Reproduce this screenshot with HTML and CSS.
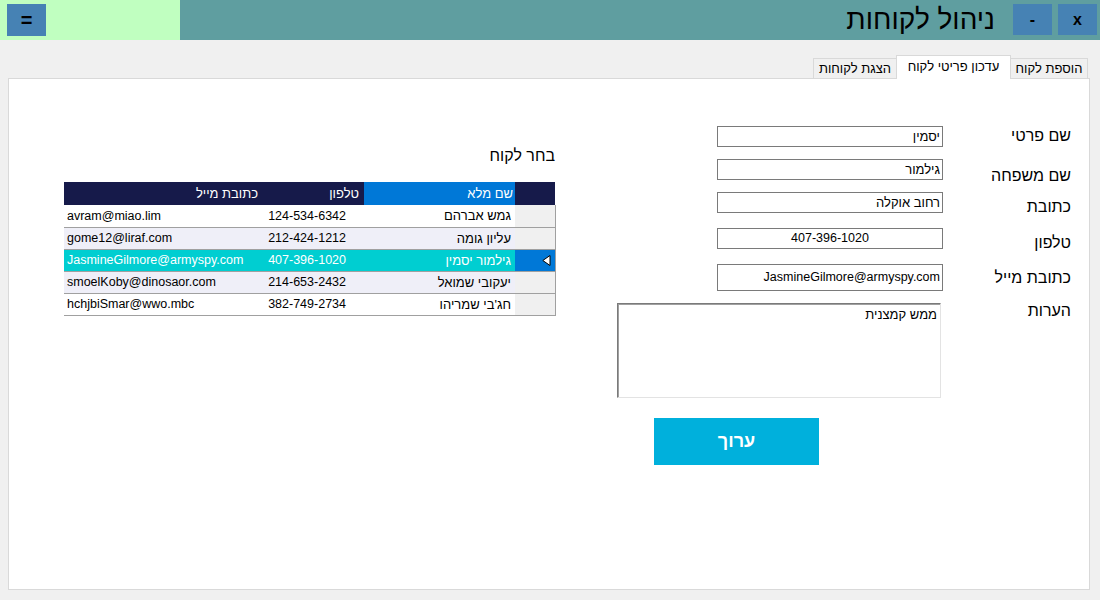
FILE: index.html
```html
<!DOCTYPE html>
<html lang="he">
<head>
<meta charset="utf-8">
<title>ניהול לקוחות</title>
<link rel="stylesheet" href="styles.css">
</head>
<body>
<div class="titlebar">
  <div class="menu-area"><div class="win-btn menu-btn">=</div></div>
  <div class="title-area">
    <div class="app-title">ניהול לקוחות</div>
    <div class="win-btn min-btn">-</div>
    <div class="win-btn close-btn">x</div>
  </div>
</div>

<div class="tabs" dir="rtl">
  <div class="tab tab-add">הוספת לקוח</div>
  <div class="tab tab-edit active">עדכון פריטי לקוח</div>
  <div class="tab tab-show">הצגת לקוחות</div>
</div>

<div class="panel">
  <div class="left">
    <div class="choose-title" dir="rtl">בחר לקוח</div>
    <table class="grid" dir="rtl">
      <thead>
        <tr>
          <th class="rowhead"></th>
          <th class="c-name sel-col">שם מלא</th>
          <th class="c-phone">טלפון</th>
          <th class="c-email">כתובת מייל</th>
        </tr>
      </thead>
      <tbody>
        <tr>
          <td class="rowhead"></td>
          <td class="c-name">גמש אברהם</td>
          <td class="c-phone">124-534-6342</td>
          <td class="c-email">avram@miao.lim</td>
        </tr>
        <tr class="alt">
          <td class="rowhead"></td>
          <td class="c-name">עליון גומה</td>
          <td class="c-phone">212-424-1212</td>
          <td class="c-email">gome12@liraf.com</td>
        </tr>
        <tr class="selected">
          <td class="rowhead"><svg class="arrow" width="9" height="11" viewBox="0 0 9 11"><polygon points="8,0.5 8,10.5 0.8,5.5" fill="#ffffff" stroke="#000000" stroke-width="1"/></svg></td>
          <td class="c-name">גילמור יסמין</td>
          <td class="c-phone">407-396-1020</td>
          <td class="c-email">JasmineGilmore@armyspy.com</td>
        </tr>
        <tr class="alt">
          <td class="rowhead"></td>
          <td class="c-name">יעקובי שמואל</td>
          <td class="c-phone">214-653-2432</td>
          <td class="c-email">smoelKoby@dinosaor.com</td>
        </tr>
        <tr>
          <td class="rowhead"></td>
          <td class="c-name">חג'בי שמריהו</td>
          <td class="c-phone">382-749-2734</td>
          <td class="c-email">hchjbiSmar@wwo.mbc</td>
        </tr>
      </tbody>
    </table>
  </div>

  <div class="right">
    <div class="fields">
      <div class="field f1" dir="rtl">יסמין</div>
      <div class="field f2" dir="rtl">גילמור</div>
      <div class="field f3" dir="rtl">רחוב אוקלה</div>
      <div class="field f4 center">407-396-1020</div>
      <div class="field f5 tall" dir="rtl">JasmineGilmore@armyspy.com</div>
      <div class="notes" dir="rtl">ממש קמצנית</div>
      <div class="edit-btn">ערוך</div>
    </div>
    <div class="labels" dir="rtl">
      <div class="label l1">שם פרטי</div>
      <div class="label l2">שם משפחה</div>
      <div class="label l3">כתובת</div>
      <div class="label l4">טלפון</div>
      <div class="label l5">כתובת מייל</div>
      <div class="label l6">הערות</div>
    </div>
  </div>
</div>
</body>
</html>
```

FILE: styles.css
```css
* { box-sizing: border-box; }

html, body {
  margin: 0;
  padding: 0;
}

body {
  width: 1100px;
  height: 600px;
  overflow: hidden;
  background: #f0f0f0;
  font-family: "Liberation Sans", "DejaVu Sans", Arial, sans-serif;
  color: #000;
}

/* ---------- title bar ---------- */
.titlebar {
  display: flex;
  height: 40px;
}

.menu-area {
  width: 180px;
  background: #c0ffc0;
  padding: 4px 0 0 7px;
}

.title-area {
  flex: 1;
  background: #5f9ea0;
  display: flex;
  justify-content: flex-end;
  align-items: flex-start;
  padding-right: 3px;
}

.win-btn {
  width: 39px;
  height: 31px;
  background: #4682b4;
  color: #000;
  font-weight: bold;
  font-size: 16px;
  display: flex;
  align-items: center;
  justify-content: center;
}

.menu-btn {
  height: 32px;
  font-size: 20px;
}

.title-area .win-btn { margin-top: 4px; }

.min-btn { margin-right: 6px; }

.app-title {
  font-size: 28px;
  line-height: 40px;
  margin-right: 18px;
  color: #000;
}

/* ---------- tabs ---------- */
.tabs {
  display: flex;
  align-items: flex-end;
  height: 23px;
  margin-top: 15px;
  padding-right: 12px;
}

.tab {
  height: 20px;
  border: 1px solid #d9d9d9;
  border-bottom: none;
  background: #f0f0f0;
  font-size: 13px;
  line-height: 19px;
  text-align: center;
  white-space: nowrap;
}

.tab-add { width: 78px; }
.tab-show { width: 84px; margin-right: -1px; }

.tab.active {
  width: 115px;
  height: 24px;
  margin-bottom: -1px;
  margin-right: -1px;
  background: #fff;
  position: relative;
  z-index: 1;
  line-height: 21px;
}

/* ---------- panel ---------- */
.panel {
  margin-left: 8px;
  width: 1082px;
  height: 512px;
  background: #fff;
  border: 1px solid #d9d9d9;
  display: flex;
  justify-content: space-between;
}

.left {
  margin-left: 55px;
  padding-top: 67px;
  width: 491px;
}

.choose-title {
  font-size: 16px;
  line-height: 20px;
  text-align: right;
  height: 20px;
  margin-bottom: 16px;
}

/* ---------- grid ---------- */
.grid {
  border-collapse: collapse;
  width: 491px;
  table-layout: fixed;
  font-size: 12.5px;
}

.grid th {
  height: 23px;
  background: #161a4a;
  color: #fff;
  font-weight: normal;
  font-size: 13px;
  text-align: right;
  padding: 0 5px 0 0;
  white-space: nowrap;
}

.grid th.sel-col {
  background: #0078d7;
  padding-right: 2px;
}

.grid td {
  height: 22px;
  padding: 0;
  border-bottom: 1px solid #a0a0a0;
  white-space: nowrap;
  overflow: hidden;
}

.grid .rowhead { width: 40px; }
.grid .c-name { width: 151px; }
.grid .c-phone { width: 101px; }
.grid .c-email { width: 199px; }

.grid td.rowhead {
  background: #f0f0f0;
  border-right: 1px solid #a0a0a0;
}

.grid td.c-name {
  text-align: right;
  padding-right: 4px;
  font-size: 13px;
}

.grid td.c-phone {
  text-align: right;
  padding-right: 18px;
}

.grid td.c-email {
  text-align: left;
  direction: ltr;
  padding-left: 3px;
}

.grid tr.alt td { background: #efeff8; }
.grid tr.alt td.rowhead { background: #f0f0f0; }

.grid tr.selected td {
  background: #00ced1;
  color: #fff;
}

.grid tr.selected td.rowhead {
  background: #0078d7;
}

.arrow {
  display: block;
  margin-right: 4px;
}

/* ---------- form ---------- */
.right {
  display: flex;
  padding-top: 47px;
  padding-right: 18px;
}

.fields {
  width: 326px;
  display: flex;
  flex-direction: column;
  align-items: flex-end;
}

.field {
  width: 226px;
  height: 21px;
  border: 1px solid #7a7a7a;
  font-size: 13px;
  line-height: 19px;
  padding: 0 2px;
  text-align: right;
  white-space: nowrap;
}

.field.center { text-align: center; font-size: 12.5px; }
.field.tall { height: 27px; line-height: 24px; font-size: 12.5px; }

.f2, .f3 { margin-top: 12px; }
.f4, .f5 { margin-top: 15px; }

.notes {
  align-self: flex-start;
  margin-top: 12px;
  width: 324px;
  height: 95px;
  border: 1px solid;
  border-color: #7a7a7a #e3e3e3 #e3e3e3 #7a7a7a;
  box-shadow: inset 1px 1px 0 #a0a0a0;
  font-size: 13px;
  line-height: 16px;
  padding: 3px 3px 0 3px;
  text-align: right;
}

.edit-btn {
  align-self: flex-start;
  margin-left: 37px;
  margin-top: 20px;
  width: 165px;
  height: 47px;
  background: #00b0dc;
  color: #fff;
  font-weight: bold;
  font-size: 18px;
  display: flex;
  align-items: center;
  justify-content: center;
}

.labels {
  width: 128px;
  display: flex;
  flex-direction: column;
}

.label {
  font-size: 16px;
  line-height: 20px;
  height: 20px;
  text-align: right;
  white-space: nowrap;
}

.l2 { margin-top: 20px; }
.l3 { margin-top: 11px; }
.l4 { margin-top: 16px; }
.l5 { margin-top: 15px; }
.l6 { margin-top: 13px; }
```
